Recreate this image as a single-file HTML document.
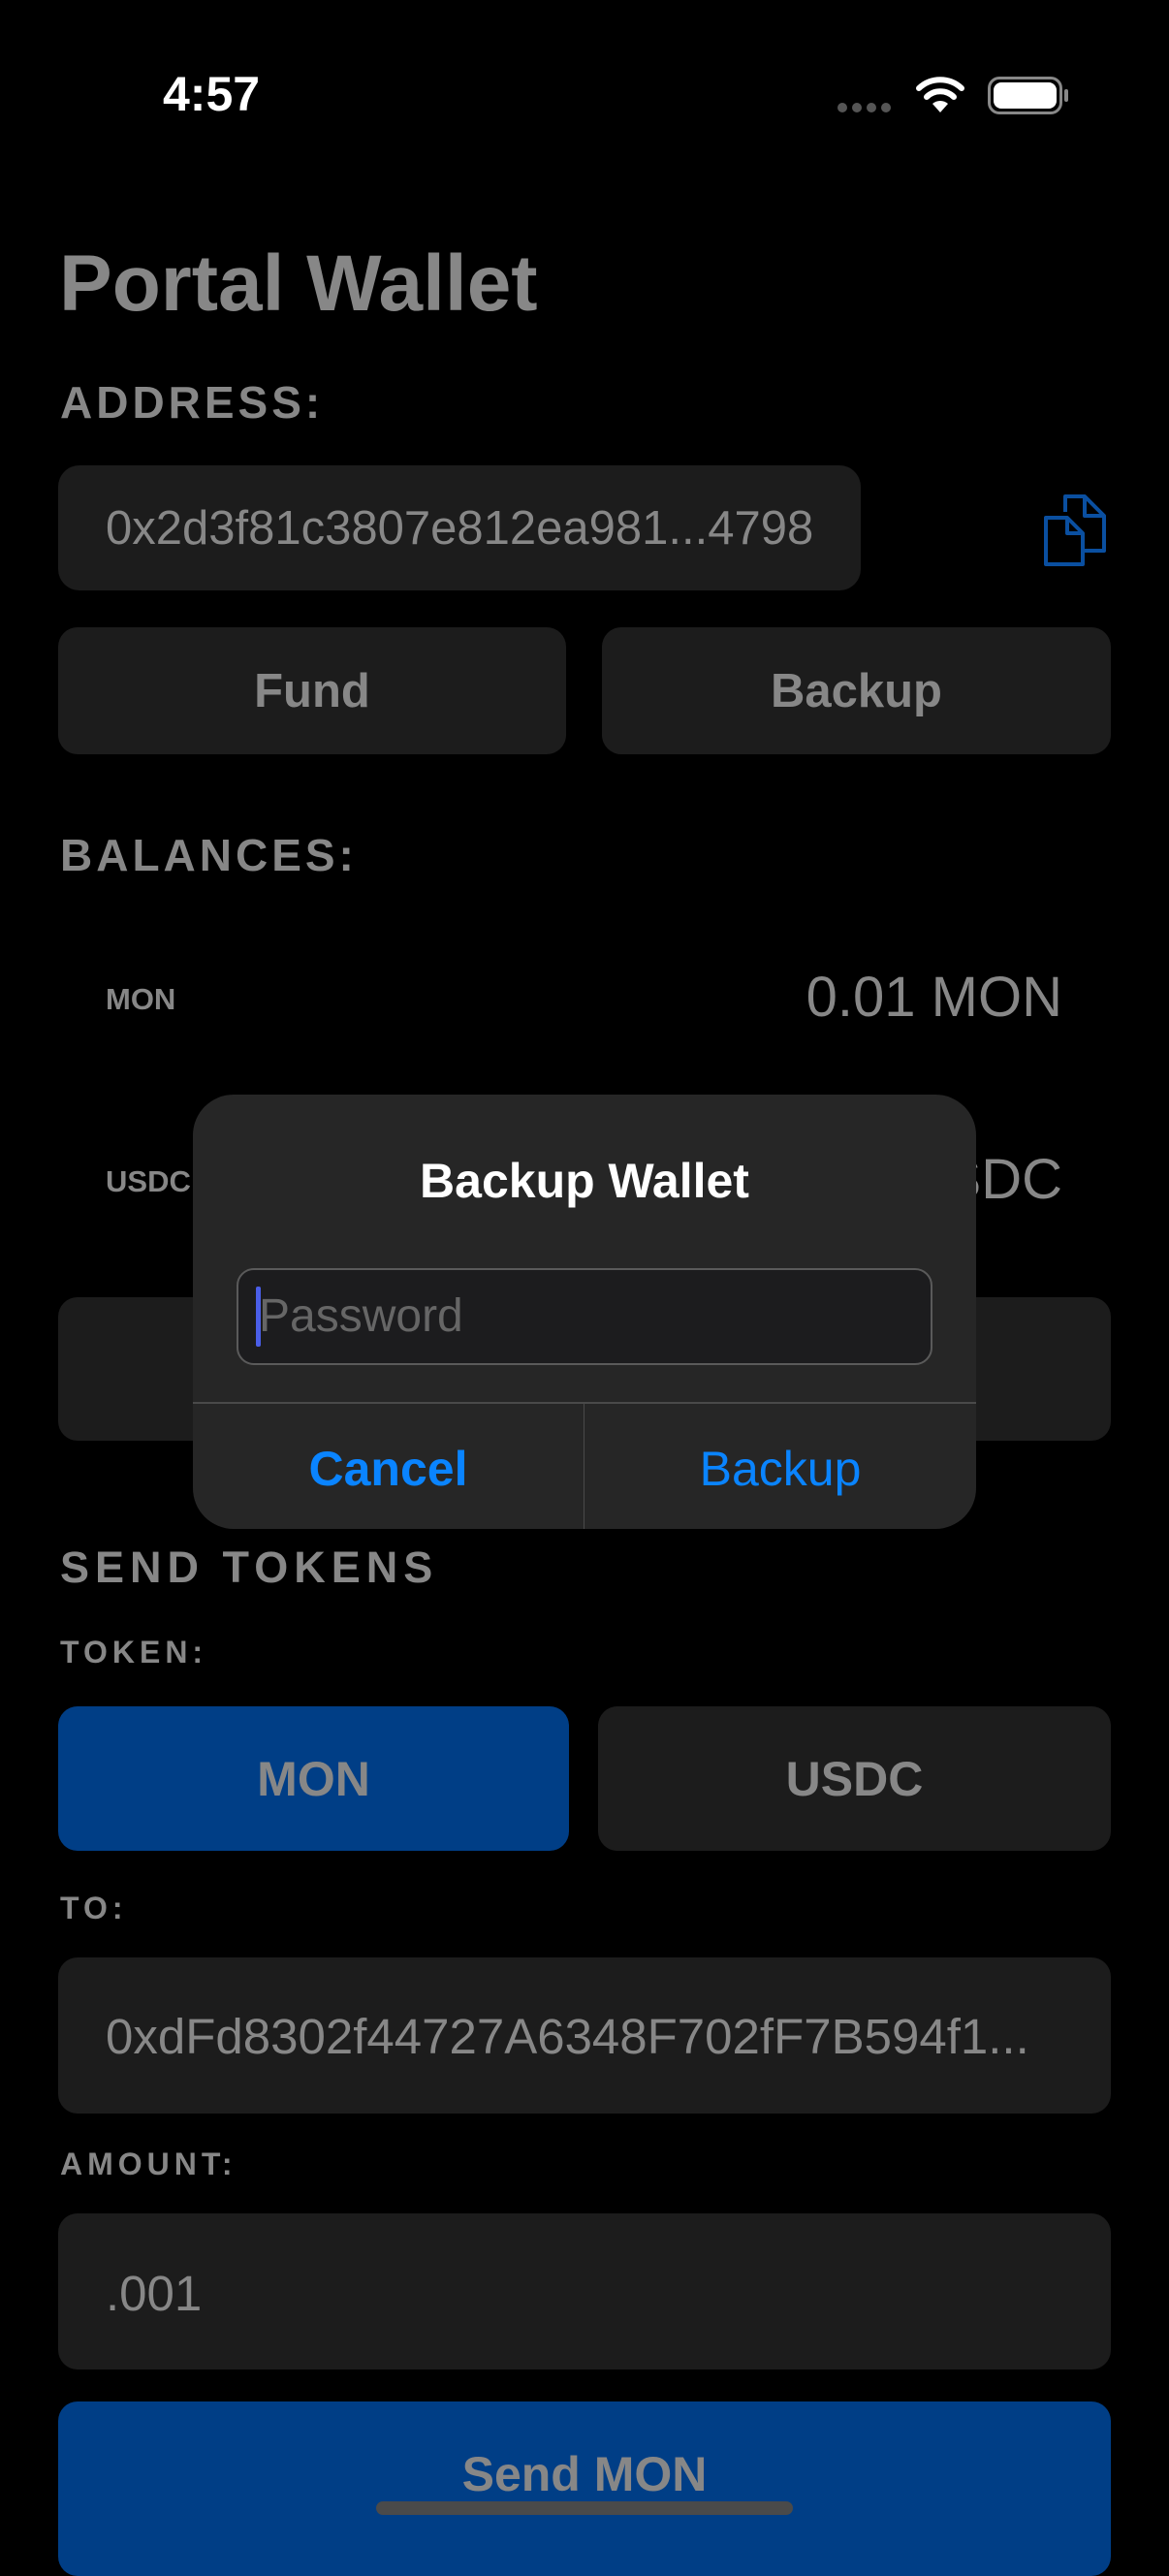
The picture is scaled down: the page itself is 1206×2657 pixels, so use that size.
<!DOCTYPE html>
<html><head><meta charset="utf-8"><style>
*{margin:0;padding:0;box-sizing:border-box}
body{width:1206px;height:2622px;background:#000;position:relative;overflow:hidden;font-family:"Liberation Sans",sans-serif;color:#878787}
.a{position:absolute}
.t{position:absolute;white-space:nowrap;line-height:1}
.box{position:absolute;background:#1c1c1c;border-radius:20px}
.c{display:flex;align-items:center;justify-content:center;font-weight:bold}
.lbl{font-weight:bold;letter-spacing:4px}
</style></head><body>
<div class="t" style="left:168px;top:72px;font-size:50px;font-weight:bold;color:#fff">4:57</div>
<div class="a" style="left:864px;top:106px;width:10px;height:10px;border-radius:5px;background:#555"></div>
<div class="a" style="left:879px;top:106px;width:10px;height:10px;border-radius:5px;background:#555"></div>
<div class="a" style="left:894px;top:106px;width:10px;height:10px;border-radius:5px;background:#555"></div>
<div class="a" style="left:909px;top:106px;width:10px;height:10px;border-radius:5px;background:#555"></div>
<svg class="a" style="left:944px;top:78px" width="52" height="40" viewBox="0 0 52 40"><path d="M26 38 L18 29 A12 12 0 0 1 34 29 Z" fill="#fff"/><path d="M12 22 A20 20 0 0 1 40 22" stroke="#fff" stroke-width="6" fill="none" stroke-linecap="round"/><path d="M4 13 A32 32 0 0 1 48 13" stroke="#fff" stroke-width="6" fill="none" stroke-linecap="round"/></svg>
<div class="a" style="left:1019px;top:79px;width:77px;height:39px;border:3px solid #888;border-radius:12px"></div>
<div class="a" style="left:1025px;top:85px;width:65px;height:27px;background:#fff;border-radius:8px"></div>
<div class="a" style="left:1098px;top:92px;width:4px;height:13px;background:#888;border-radius:2px"></div>

<div class="t" style="left:61px;top:252px;font-size:82px;font-weight:bold">Portal Wallet</div>
<div class="t lbl" style="left:62px;top:392px;font-size:46px;letter-spacing:4px">ADDRESS:</div>
<div class="box" style="left:60px;top:480px;width:828px;height:129px;border-radius:22px"></div>
<div class="t" style="left:109px;top:521px;font-size:49px">0x2d3f81c3807e812ea981...4798</div>
<svg class="a" style="left:1075px;top:508px" width="68" height="78" viewBox="0 0 68 78" fill="none" stroke="#0a4fa0" stroke-width="4" stroke-linejoin="round"><path d="M24 20 V4 H44 L64 24 V60 H42"/><path d="M44 4 V24 H64"/><path d="M4 26 H26 L42 42 V74 H4 Z"/><path d="M26 26 V42 H42"/></svg>
<div class="box c" style="left:60px;top:647px;width:524px;height:131px;font-size:49px">Fund</div>
<div class="box c" style="left:621px;top:647px;width:525px;height:131px;font-size:49px">Backup</div>

<div class="t lbl" style="left:62px;top:859px;font-size:46px;letter-spacing:4px">BALANCES:</div>
<div class="t" style="left:109px;top:1015px;font-size:31px;font-weight:bold">MON</div>
<div class="t" style="right:110px;top:1000px;font-size:58px">0.01 MON</div>
<div class="t" style="left:109px;top:1203px;font-size:31px;font-weight:bold">USDC</div>
<div class="t" style="right:110px;top:1188px;font-size:58px">0 USDC</div>
<div class="box" style="left:60px;top:1338px;width:1086px;height:148px"></div>

<div class="t lbl" style="left:62px;top:1594px;font-size:45px;letter-spacing:6px">SEND TOKENS</div>
<div class="t lbl" style="left:62px;top:1688px;font-size:32px;letter-spacing:5px">TOKEN:</div>
<div class="box c" style="left:60px;top:1760px;width:527px;height:149px;background:#003e86;font-size:50px">MON</div>
<div class="box c" style="left:617px;top:1760px;width:529px;height:149px;font-size:50px">USDC</div>
<div class="t lbl" style="left:62px;top:1952px;font-size:32px;letter-spacing:5px">TO:</div>
<div class="box" style="left:60px;top:2019px;width:1086px;height:161px"></div>
<div class="t" style="left:109px;top:2075px;font-size:51px">0xdFd8302f44727A6348F702fF7B594f1...</div>
<div class="t lbl" style="left:62px;top:2216px;font-size:32px;letter-spacing:5px">AMOUNT:</div>
<div class="box" style="left:60px;top:2283px;width:1086px;height:161px"></div>
<div class="t" style="left:109px;top:2340px;font-size:51px">.001</div>
<div class="box" style="left:60px;top:2477px;width:1086px;height:180px;background:#003e86"></div>
<div class="t" style="left:0;width:1206px;text-align:center;top:2527px;font-size:50px;font-weight:bold">Send MON</div>
<div class="a" style="left:388px;top:2580px;width:430px;height:14px;border-radius:7px;background:#4a4a4a"></div>

<div class="a" style="left:199px;top:1129px;width:808px;height:448px;background:#262626;border-radius:42px;overflow:hidden">
<div class="t" style="left:0;width:808px;text-align:center;top:64px;font-size:50px;font-weight:bold;color:#fff">Backup Wallet</div>
<div class="a" style="left:45px;top:179px;width:718px;height:100px;background:#1c1c1e;border:2px solid #5a5a5a;border-radius:18px"></div>
<div class="a" style="left:65px;top:198px;width:5px;height:62px;background:#4a5ee8;border-radius:2px"></div>
<div class="t" style="left:68px;top:205px;font-size:48px;color:#666">Password</div>
<div class="a" style="left:0;top:317px;width:808px;height:2px;background:#4a4a4a"></div>
<div class="a" style="left:403px;top:318px;width:1px;height:130px;background:#4a4a4a"></div>
<div class="t" style="left:0;width:403px;text-align:center;top:361px;font-size:50px;font-weight:bold;color:#0a84ff">Cancel</div>
<div class="t" style="left:404px;width:404px;text-align:center;top:361px;font-size:50px;color:#0a84ff">Backup</div>
</div>
</body></html>
